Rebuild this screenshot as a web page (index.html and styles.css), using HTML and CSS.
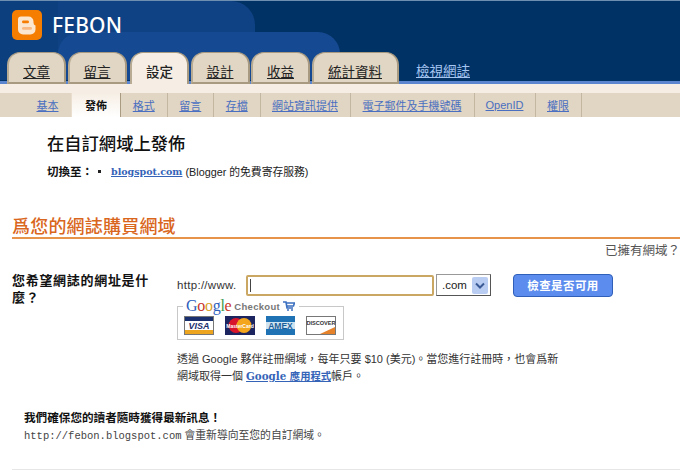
FILE: index.html
```html
<!DOCTYPE html>
<html lang="zh-Hant">
<head>
<meta charset="utf-8">
<title>FEBON</title>
<link rel="stylesheet" href="styles.css">
</head>
<body>
<header class="masthead">
  <span class="blob blob-a"></span>
  <span class="blob blob-b"></span>
  <span class="blob blob-c"></span>
  <div class="brand">
    <svg class="logo" width="30" height="30" viewBox="0 0 30 30" aria-hidden="true">
      <rect width="30" height="30" rx="5" fill="#f57d00"/>
      <path d="M9 6.500h7.500a5 5 0 0 1 5 5v1a3 3 0 0 0 2 3v4a5 5 0 0 1-5 5H11a5 5 0 0 1-5-5V9.500a3 3 0 0 1 3-3z" fill="#fbe6cf"/>
      <rect x="10" y="10.500" width="7" height="2.800" rx="1.400" fill="#f57d00"/>
      <rect x="10" y="17" width="10" height="2.800" rx="1.400" fill="#f9b983"/>
    </svg>
    <span class="blog-name">FEBON</span>
  </div>
  <nav class="tabs">
    <a class="tab t-a" href="#">文章</a>
    <a class="tab t-a" href="#">留言</a>
    <a class="tab t-a current" href="#">設定</a>
    <a class="tab t-a" href="#">設計</a>
    <a class="tab t-a" href="#">收益</a>
    <a class="tab t-b" href="#">統計資料</a>
    <a class="view-blog" href="#">檢視網誌</a>
  </nav>
</header>
<div class="band"></div>
<nav class="subnav">
  <a class="sub s-basic" href="#">基本</a>
  <a class="sub s-pub current" href="#">發佈</a>
  <a class="sub s-2" href="#">格式</a>
  <a class="sub s-2" href="#">留言</a>
  <a class="sub s-2" href="#">存檔</a>
  <a class="sub s-site" href="#">網站資訊提供</a>
  <a class="sub s-mail" href="#">電子郵件及手機號碼</a>
  <a class="sub s-oid" href="#">OpenID</a>
  <a class="sub s-perm" href="#">權限</a>
</nav>
<main class="page">
  <section class="intro">
    <h1>在自訂網域上發佈</h1>
    <p class="switch"><b>切換至：</b><span class="dot"></span><a href="#"><b>blogspot.com</b></a> (Blogger 的免費寄存服務)</p>
  </section>
  <h2>爲您的網誌購買網域</h2>
  <p class="have"><a href="#">已擁有網域？</a></p>
  <section class="buy">
    <h3>您希望網誌的網址是什麼？</h3>
    <div class="form">
      <div class="row">
        <span class="prefix">http://www.</span>
        <input class="domain" type="text" value="">
        <span class="tld"><span>.com</span><svg class="arrow" width="16" height="17" viewBox="0 0 16 17" aria-hidden="true"><rect width="16" height="17" rx="2" fill="#b9cdf2"/><path d="M4 6.500l4 4 4-4" fill="none" stroke="#3a5a96" stroke-width="2"/></svg></span>
        <button class="check" type="button">檢查是否可用</button>
      </div>
      <div class="checkout">
        <div class="legend"><span class="g-logo"><i class="b">G</i><i class="r">o</i><i class="y">o</i><i class="b">g</i><i class="gn">l</i><i class="r">e</i></span><span class="co">Checkout</span><svg width="12" height="10" viewBox="0 0 12 10" aria-hidden="true"><path d="M0 1h3l1 6h6M3.500 2h8l-1 3H4" fill="none" stroke="#3b6fc0" stroke-width="1.600"/><circle cx="5" cy="9" r="1" fill="#3b6fc0"/><circle cx="9" cy="9" r="1" fill="#3b6fc0"/></svg></div>
        <div class="cards">
          <svg width="30" height="19" viewBox="0 0 30 19" aria-hidden="true"><rect x=".5" y=".5" width="29" height="18" fill="#fff" stroke="#777"/><rect x="1" y="1" width="28" height="4" fill="#1a2f6e"/><rect x="1" y="14" width="28" height="4" fill="#eda41e"/><text x="15" y="12.500" class="c-visa">VISA</text></svg>
          <svg width="30" height="19" viewBox="0 0 30 19" aria-hidden="true"><rect width="30" height="19" fill="#1c2560"/><circle cx="11" cy="9.500" r="7.500" fill="#d8152b"/><circle cx="19" cy="9.500" r="7.500" fill="#f3a51c"/><text x="15" y="11.500" class="c-mc">MasterCard</text></svg>
          <svg width="29" height="19" viewBox="0 0 29 19" aria-hidden="true"><rect width="29" height="19" fill="#1f73b4"/><rect x="0" y="6" width="29" height="7" fill="#cfe2f0"/><text x="14.500" y="12.800" class="c-am">AMEX</text></svg>
          <svg width="30" height="19" viewBox="0 0 30 19" aria-hidden="true"><rect x=".5" y=".5" width="29" height="18" fill="#fff" stroke="#777"/><path d="M14 18 29 11v7z" fill="#e5822a"/><text x="15" y="9" class="c-di">DISCOVER</text></svg>
        </div>
      </div>
      <p class="note">透過 Google 夥伴註冊網域，每年只要 $10 (美元)。當您進行註冊時，也會爲新<br>網域取得一個 <a href="#"><b>Google 應用程式</b></a>帳戶。</p>
    </div>
  </section>
  <section class="promise">
    <h4>我們確保您的讀者隨時獲得最新訊息！</h4>
    <p><span class="mono">http://febon.blogspot.com</span> 會重新導向至您的自訂網域。</p>
  </section>
  <hr class="rule">
</main>
</body>
</html>
```
FILE: styles.css
```css
* { box-sizing: border-box; }
html, body { margin: 0; padding: 0; }
body {
  width: 680px;
  height: 472px;
  overflow: hidden;
  background: #fff;
  color: #222;
  font-family: "Liberation Sans", "Noto Sans CJK TC", sans-serif;
  font-size: 11px;
}
a { color: #3463b8; }

.masthead {
  position: relative;
  height: 84px;
  overflow: hidden;
  background: #013265;
  border-top: 1px solid #6f8fb0;
  box-shadow: inset 0 -3px 0 #5c85cf;
}
.blob { position: absolute; background: #164a8f; }
.blob-a { left: 0; top: 0; width: 58px; height: 79px; background: #0c3f7e; }
.blob-b { left: 58px; top: 0; width: 197px; height: 79px; background: #0f4285; border-radius: 0 24px 0 0; }
.blob-c { left: 58px; top: 31px; width: 282px; height: 48px; background: #154a92; border-radius: 22px 22px 0 0; }

.brand {
  position: relative;
  display: flex;
  align-items: center;
  gap: 10px;
  height: 30px;
  margin: 9px 0 0 12px;
}
.blog-name {
  color: #fff;
  font-family: "Noto Sans", sans-serif;
  font-size: 21px;
  font-weight: 500;
  letter-spacing: .2px;
}
.tabs {
  position: absolute;
  left: 7px;
  bottom: 0;
  display: flex;
  align-items: flex-end;
  gap: 1.500px;
}
.tab {
  display: flex;
  align-items: center;
  justify-content: center;
  height: 32px;
  padding-top: 7px;
  background: #e1d5c3;
  border: 2px solid #a89a80;
  border-left-color: #b9ac94;
  border-top-width: 1px;
  border-radius: 13px 13px 0 0;
  color: #222;
  font-size: 13.500px;
}
.t-a { width: 59px; }
.t-b { width: 87px; }
.tab.current {
  margin-left: 2px;
  background: #f6eee4;
  text-decoration: none;
  font-weight: 500;
  border-bottom: 0;
  padding-top: 5px;
}
.view-blog {
  margin: 0 0 4px 16px;
  color: #a6c6f2;
  font-size: 13.500px;
}

.band { height: 9px; background: #f6eee4; }
.subnav {
  display: flex;
  height: 24px;
  background: #e1d5c3;
}
.sub {
  display: flex;
  align-items: center;
  justify-content: center;
  border-right: 1px solid #c4b7a1;
  font-size: 11px;
  color: #4a6fc0;
}
.sub.current {
  background: linear-gradient(#f6eee4, #fff);
  color: #111;
  font-weight: 700;
  text-decoration: none;
  border-right: 1px solid #a99b82;
}
.s-basic { width: 72px; padding-left: 24px; border-right-color: #eadfcf; }
.s-pub { width: 49px; }
.s-2 { width: 46.500px; }
.s-site { width: 90px; }
.s-mail { width: 124px; }
.s-oid { width: 61px; }
.s-perm { width: 46px; }

.intro { padding: 17px 0 0 47px; }
h1 {
  margin: 0;
  color: #111;
  font-size: 17.300px;
  font-weight: 500;
  line-height: 20px;
}
.switch {
  display: flex;
  align-items: center;
  margin: 9px 0 0;
  height: 16px;
  font-size: 10.800px;
  white-space: pre;
}
.switch > b { color: #111; font-size: 11.500px; }
.switch a b { color: #3463b8; font-family: "DejaVu Serif", serif; font-size: 9.500px; }
.dot { width: 3px; height: 3px; margin: 0 10px 0 5px; background: #222; }
h2 {
  margin: 38px 0 0 12px;
  height: 22px;
  border-bottom: 2px solid #e8934a;
  color: #d9661c;
  font-size: 18px;
  font-weight: 500;
  line-height: 20px;
  letter-spacing: .2px;
}
.have {
  margin: 4px 0 0;
  text-align: right;
  line-height: 17px;
  font-size: 12.500px;
}
.have a { color: #555; text-decoration: none; }

.buy { display: flex; margin-top: 12px; }
h3 {
  flex: none;
  width: 142px;
  margin: 0 23px 0 12px;
  font-size: 13px;
  font-weight: 700;
  line-height: 17px;
  letter-spacing: .7px;
  color: #111;
}
.form { padding-top: 2px; }
.row { display: flex; align-items: center; height: 22px; }
.prefix { margin-right: 3px; width: 66px; font-size: 11.500px; color: #333; letter-spacing: .3px; }
.domain {
  width: 188px;
  height: 21px;
  padding: 0;
  background: linear-gradient(#444, #444) 2px 2px / 1px 13px no-repeat #fff;
  border: 2px solid #cba764;
  border-radius: 2px;
  outline: 0;
}
.tld {
  display: flex;
  align-items: center;
  justify-content: space-between;
  width: 55px;
  height: 22px;
  margin-left: 2px;
  padding: 0 2px 0 5px;
  border: 1px solid #777;
  border-color: #999 #555 #555 #999;
  font-size: 11.500px;
  color: #222;
}
.check {
  width: 100px;
  height: 23px;
  margin-left: 22px;
  padding: 0;
  background: #5c8cee;
  border: 1px solid #2f5fb8;
  border-radius: 4px;
  color: #fff;
  font: 700 11.500px "Liberation Sans", "Noto Sans CJK TC", sans-serif;
  letter-spacing: .4px;
}
.checkout {
  position: relative;
  width: 167px;
  height: 34px;
  margin-top: 10px;
  border: 1px solid #c8c8c8;
}
.legend {
  position: absolute;
  left: 5px;
  top: -8px;
  display: flex;
  align-items: center;
  gap: 3px;
  height: 14px;
  padding: 0 4px 0 3px;
  background: #fff;
}
.g-logo { font: 16px/14px "Liberation Serif", serif; letter-spacing: -.3px; }
.g-logo i { font-style: normal; }
.b { color: #2f5fbc; } .r { color: #c8352a; } .y { color: #d9a326; } .gn { color: #3c9a4c; }
.co { color: #777; font-size: 9.500px; font-weight: 700; letter-spacing: .3px; }
.cards { display: flex; gap: 11px; padding: 9px 0 0 6px; }
.cards svg { flex: none; display: block; }
.c-visa { font: italic 700 9px "Liberation Sans", sans-serif; fill: #1a2f6e; text-anchor: middle; }
.c-mc { font: 700 5px "Liberation Sans", sans-serif; fill: #fff; text-anchor: middle; }
.c-am { font: 700 8.500px "Liberation Sans", sans-serif; fill: #1b5f9a; text-anchor: middle; }
.c-di { font: 700 5.600px "Liberation Sans", sans-serif; fill: #333; text-anchor: middle; }
.note {
  margin: 11px 0 0;
  font-size: 11px;
  line-height: 17px;
  color: #333;
  white-space: nowrap;
}
.note a b { font-family: "DejaVu Serif", "Noto Sans CJK TC", serif; font-size: 10.300px; }

.promise { margin: 25px 0 0 24px; }
h4 {
  margin: 0;
  color: #111;
  font-size: 11.600px;
  font-weight: 700;
  line-height: 16px;
}
.promise p { margin: 1px 0 0; font-size: 10.800px; line-height: 16px; color: #444; }
.mono { font-family: "Liberation Mono", monospace; font-size: 10.500px; }
.rule { margin: 25px 0 0 12px; border: 0; border-top: 1px solid #e6e6e6; }
```
